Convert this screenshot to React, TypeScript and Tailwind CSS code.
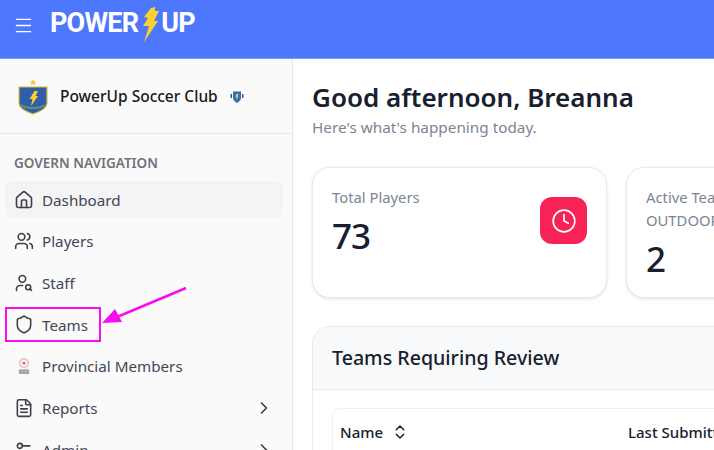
import { ChevronRight, ChevronsUpDown, Clock, FileText, House, Menu, Settings2, Shield, UserSearch, Users } from "lucide-react";

const font = { fontFamily: '"Noto Sans", sans-serif' };

function Bolt({ className }: { className: string }) {
  return (
    <svg viewBox="0 0 17 35" className={className}>
      <path d="M9 1 L13 0 L13 4 L17 4 L12 14 L16 14 L2 35 L7 19 L1 19 L6 11 L2 10 Z" fill="#fdd02f" />
    </svg>
  );
}

function Crest() {
  return (
    <svg viewBox="0 0 30 36" className="h-[36px] w-[30px]">
      <path d="M15 0 L16 2.300 L18.500 2.500 L16.600 4.100 L17.200 6.500 L15 5.200 L12.800 6.500 L13.400 4.100 L11.500 2.500 L14 2.300 Z" fill="#f5c842" />
      <path d="M1 8 H29 V24 C29 30 21 33 15 35 C9 33 1 30 1 24 Z" fill="#2f5fa8" stroke="#d9bf3f" strokeWidth="1.200" />
      <path d="M3 26 C8 30 22 30 27 26" fill="none" stroke="#6f8a7a" strokeWidth="2" />
      <path d="M16.500 12 L20 12 L17.500 17 L20 17 L13 27 L14.500 20 L11.500 20 Z" fill="#fdd02f" />
    </svg>
  );
}

function ClubBadge() {
  return (
    <svg viewBox="0 0 14 12" className="ml-[12px] h-[12px] w-[14px]">
      <path d="M3 0.500 H11 V7 C11 9.500 8.500 11 7 12 C5.500 11 3 9.500 3 7 Z" fill="#2f6fb5" />
      <rect x="0.500" y="3" width="1.500" height="4" fill="#3d5a80" />
      <rect x="12" y="3" width="1.500" height="4" fill="#3d5a80" />
      <path d="M6 3 H8.500 L7.500 5.500 H8.500 L6 9 L6.500 6 H5.500 Z" fill="#e9c84a" />
    </svg>
  );
}

function NavRow({ icon, label, active, chevron }: { icon: React.ReactNode; label: string; active?: boolean; chevron?: boolean }) {
  return (
    <div className={`flex h-[37px] shrink-0 items-center rounded-lg pl-[9px] pr-[9px] ${active ? "bg-[#f4f4f5]" : ""}`}>
      <span className="flex w-[20px] shrink-0 justify-center text-[#3f3f46]">{icon}</span>
      <span className="ml-[8px] flex-1 text-[15.200px] leading-5 text-[#3f4756]">{label}</span>
      {chevron && <ChevronRight size={20} strokeWidth={2} className="text-[#3f3f46]" />}
    </div>
  );
}

export default function App() {
  return (
    <div className="relative flex h-[450px] w-[714px] flex-col overflow-hidden bg-white" style={font}>
      <header className="flex h-[59px] shrink-0 items-start border-b border-[#7f9dff] bg-[#4d77fd] pl-[13px]">
        <Menu size={21} strokeWidth={1.700} className="mt-[15px] text-white" />
        <div className="ml-[16px] mt-[7px] flex items-start font-bold text-white" style={{ fontFamily: "Roboto, sans-serif" }}>
          <span className="text-[27px] leading-[33px] tracking-[-0.8px]">POWER</span>
          <Bolt className="ml-[4px] h-[35px] w-[17px]" />
          <span className="ml-[2px] text-[27px] leading-[33px] tracking-[-0.8px]">UP</span>
        </div>
      </header>

      <div className="flex min-h-0 flex-1">
        <aside className="flex w-[293px] shrink-0 flex-col border-r border-[#e8e8ea] bg-[#fafafa]">
          <div className="flex h-[75px] shrink-0 items-center border-b border-[#e8e8ea] pb-0 pl-[18px] pt-[2px]">
            <Crest />
            <span className="ml-[12px] text-[15.500px] font-medium text-[#18181b]">PowerUp Soccer Club</span>
            <ClubBadge />
          </div>
          <div className="flex flex-col px-[5px]">
            <div className="mb-[9px] ml-[9px] mt-[20px] text-[13.500px] font-semibold leading-[18px] text-[#71717a]">GOVERN NAVIGATION</div>
            <div className="flex w-[278px] flex-col gap-[4.700px]">
              <NavRow active icon={<House size={20} strokeWidth={1.900} />} label="Dashboard" />
              <NavRow icon={<Users size={20} strokeWidth={1.900} />} label="Players" />
              <NavRow icon={<UserSearch size={20} strokeWidth={1.900} />} label="Staff" />
              <NavRow icon={<Shield size={21} strokeWidth={1.900} />} label="Teams" />
              <NavRow
                icon={
                  <svg viewBox="0 0 14 18" className="h-[17px] w-[14px]">
                    <circle cx="7" cy="5.500" r="4.500" fill="none" stroke="#e8a0a8" strokeWidth="2" strokeDasharray="1.500 1" />
                    <circle cx="7" cy="5.500" r="1.500" fill="#d9636f" />
                    <rect x="1.500" y="12" width="11" height="5" fill="#a8a8a8" />
                  </svg>
                }
                label="Provincial Members"
              />
              <NavRow chevron icon={<FileText size={20} strokeWidth={1.900} />} label="Reports" />
              <NavRow chevron icon={<Settings2 size={20} strokeWidth={1.900} />} label="Admin" />
            </div>
          </div>
        </aside>

        <main className="min-w-0 flex-1 pl-[19px]">
          <h1 className="mt-[21px] whitespace-nowrap text-[26px] font-semibold leading-[34px] text-[#18202f]">Good afternoon, Breanna</h1>
          <p className="mt-[3px] text-[15.300px] leading-[20px] text-[#7b8494]">Here's what's happening today.</p>

          <div className="mt-[30px] flex gap-[19px]">
            <div className="flex h-[131px] w-[295px] shrink-0 items-start justify-between rounded-[18px] border border-[#e9eaec] bg-white pl-[19px] pr-[19px] pt-[18px] shadow-[0_1px_3px_rgba(0,0,0,0.12)]">
              <div>
                <div className="text-[14.800px] leading-[22px] text-[#7b8494]">Total Players</div>
                <div className="mt-[6px] text-[35px] font-medium leading-[44px] tracking-[-1px] text-[#18202f]">73</div>
              </div>
              <div className="mt-[11px] flex h-[47px] w-[47px] items-center justify-center rounded-[12px] bg-[#f72357]">
                <Clock size={26} strokeWidth={1.500} className="text-white" />
              </div>
            </div>
            <div className="h-[131px] w-[295px] shrink-0 rounded-[18px] border border-[#e9eaec] bg-white pl-[19px] pt-[18px] shadow-[0_1px_3px_rgba(0,0,0,0.12)]">
              <div className="whitespace-nowrap text-[14.800px] leading-[23px] text-[#7b8494]">
                Active Teams
                <br />
                OUTDOOR
              </div>
              <div className="mt-[5px] text-[35px] font-medium leading-[44px] tracking-[-1px] text-[#18202f]">2</div>
            </div>
          </div>

          <section className="mt-[28px] w-[700px] rounded-t-[18px] border border-b-0 border-[#e9eaec]">
            <div className="flex h-[63px] items-center rounded-t-[18px] border-b border-[#e9eaec] bg-[#f8f9fb] pl-[19px]">
              <h2 className="text-[19.600px] font-medium text-[#18202f]">Teams Requiring Review</h2>
            </div>
            <div className="ml-[19px] mt-[18px] flex h-[60px] rounded-t-lg border border-[#eeeff1] pl-[7px] pt-[12px] text-[15px] font-medium text-[#18202f]">
              <span className="flex w-[288px] shrink-0 items-start">
                Name
                <ChevronsUpDown size={18} strokeWidth={2} className="ml-[8px] mt-[2px]" />
              </span>
              <span className="whitespace-nowrap">Last Submitted</span>
            </div>
          </section>
        </main>
      </div>

      {/* annotation over the Teams row */}
      <div className="absolute left-[5px] top-[307px] h-[35px] w-[96px] border-2 border-[#f70df0]" />
      <svg className="absolute left-[95px] top-[280px]" width="100" height="50" viewBox="0 0 100 50">
        <line x1="91" y1="8" x2="22" y2="37" stroke="#f70df0" strokeWidth="2.500" />
        <path d="M7 43 L20 29 L27 42 Z" fill="#f70df0" />
      </svg>
    </div>
  );
}
